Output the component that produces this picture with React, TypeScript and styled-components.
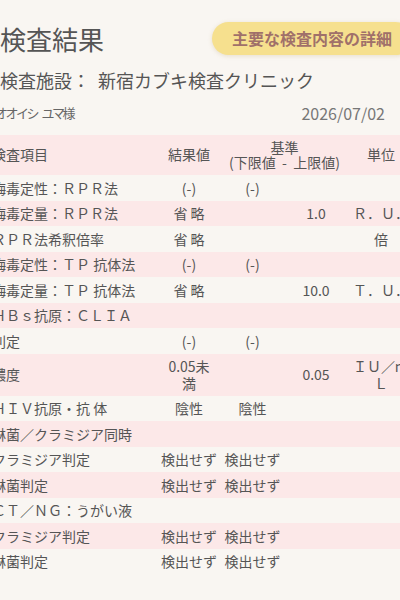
import React from "react";
import styled, { createGlobalStyle } from "styled-components";

const Global = createGlobalStyle`
  html, body {
    margin: 0;
    padding: 0;
    overflow: hidden;
    background: #f9f6f2;
  }
  body {
    font-family: "Noto Sans CJK JP", "Noto Sans", sans-serif;
    color: #555;
  }
`;

const Page = styled.div`
  width: 426px;
  margin-left: -12px;
  padding-top: 22px;
`;

const TitleRow = styled.div`
  display: flex;
  align-items: center;
  justify-content: space-between;
  padding: 0 2px 0 12px;
  height: 33px;
`;

const Title = styled.h1`
  margin: 0;
  font-size: 26px;
  line-height: 33px;
  font-weight: 400;
  color: #555;
`;

const DetailButton = styled.button`
  height: 33px;
  border: none;
  border-radius: 17px;
  padding: 0 20px;
  background: #f6e08e;
  box-shadow: 0 1px 4px rgba(180, 150, 90, 0.25);
  color: #a0706a;
  font-family: "Noto Sans CJK JP", sans-serif;
  font-size: 16px;
  font-weight: 700;
  line-height: 33px;
  white-space: nowrap;
`;

const Facility = styled.div`
  margin-top: 13px;
  padding-left: 12px;
  font-size: 18px;
  line-height: 24px;
  color: #555;
  white-space: pre;
`;

const InfoRow = styled.div`
  display: flex;
  align-items: center;
  justify-content: space-between;
  margin-top: 10px;
  padding: 0 29px 0 7px;
  height: 21px;
`;

const Patient = styled.span`
  font-size: 13px;
  letter-spacing: -2.5px;
  word-spacing: 4px;
  color: #666;
  white-space: nowrap;
`;

const DateText = styled.span`
  font-size: 16px;
  color: #777;
`;

const Table = styled.table`
  margin-top: 12px;
  width: 426px;
  border-collapse: collapse;
  table-layout: fixed;
  font-size: 14px;
  color: #555;
`;

const Col = styled.col<{ $w: number }>`
  width: ${(p) => p.$w}px;
`;

const HeadRow = styled.tr`
  background: #fce8e8;
`;

const HeadCell = styled.th<{ $align?: string }>`
  font-weight: 400;
  line-height: 15.5px;
  padding: 4.5px 2px 4.5px ${(p) => (p.$align === "left" ? "4px" : "2px")};
  text-align: ${(p) => p.$align || "center"};
  vertical-align: middle;
  white-space: pre;
`;

const Row = styled.tr`
  &:nth-child(even) {
    background: #fce8e8;
  }
`;

const Cell = styled.td<{ $align?: string }>`
  line-height: 16.5px;
  padding: 4.5px 2px 4.5px ${(p) => (p.$align === "left" ? "4px" : "2px")};
  text-align: ${(p) => p.$align || "center"};
  vertical-align: middle;
  white-space: nowrap;
`;

type R = {
  label: string;
  result?: React.ReactNode;
  low?: string;
  high?: string;
  unit?: React.ReactNode;
};

const rows: R[] = [
  { label: "梅毒定性：ＲＰＲ法", result: "(-)", low: "(-)" },
  { label: "梅毒定量：ＲＰＲ法", result: "省 略", high: "1.0", unit: "Ｒ．Ｕ．" },
  { label: "ＲＰＲ法希釈倍率", result: "省 略", unit: "倍" },
  { label: "梅毒定性：ＴＰ 抗体法", result: "(-)", low: "(-)" },
  { label: "梅毒定量：ＴＰ 抗体法", result: "省 略", high: "10.0", unit: "Ｔ．Ｕ．" },
  { label: "ＨＢｓ抗原：ＣＬＩＡ" },
  { label: "判定", result: "(-)", low: "(-)" },
  {
    label: "濃度",
    result: (
      <>
        0.05未
        <br />満
      </>
    ),
    high: "0.05",
    unit: (
      <>
        ＩＵ／ｍ
        <br />Ｌ
      </>
    ),
  },
  { label: "ＨＩＶ抗原・抗 体", result: "陰性", low: "陰性" },
  { label: "淋菌／クラミジア同時" },
  { label: "クラミジア判定", result: "検出せず", low: "検出せず" },
  { label: "淋菌判定", result: "検出せず", low: "検出せず" },
  { label: "ＣＴ／ＮＧ：うがい液" },
  { label: "クラミジア判定", result: "検出せず", low: "検出せず" },
  { label: "淋菌判定", result: "検出せず", low: "検出せず" },
];

export default function App() {
  return (
    <>
      <Global />
      <Page>
        <TitleRow>
          <Title>検査結果</Title>
          <DetailButton>主要な検査内容の詳細</DetailButton>
        </TitleRow>
        <Facility>{"検査施設：  新宿カブキ検査クリニック"}</Facility>
        <InfoRow>
          <Patient>オオイシ ユマ様</Patient>
          <DateText>2026/07/02</DateText>
        </InfoRow>
        <Table>
          <colgroup>
            <Col $w={169} />
            <Col $w={64} />
            <Col $w={63} />
            <Col $w={64} />
            <Col $w={66} />
          </colgroup>
          <thead>
            <HeadRow>
              <HeadCell $align="left">検査項目</HeadCell>
              <HeadCell>結果値</HeadCell>
              <HeadCell colSpan={2}>{"基準\n(下限値  -  上限値)"}</HeadCell>
              <HeadCell>単位</HeadCell>
            </HeadRow>
          </thead>
          <tbody>
            {rows.map((r, i) => (
              <Row key={i}>
                <Cell $align="left">{r.label}</Cell>
                <Cell>{r.result}</Cell>
                <Cell>{r.low}</Cell>
                <Cell>{r.high}</Cell>
                <Cell>{r.unit}</Cell>
              </Row>
            ))}
          </tbody>
        </Table>
      </Page>
    </>
  );
}
